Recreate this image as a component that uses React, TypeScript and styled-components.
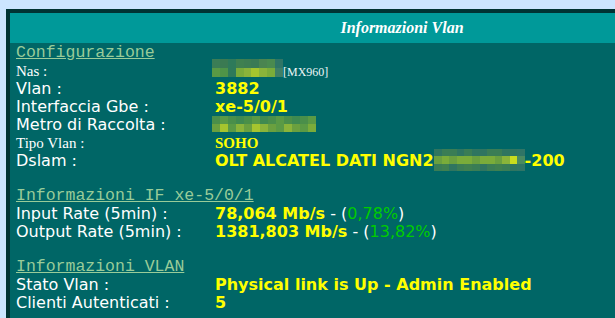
import React from 'react'
import { styled, createGlobalStyle } from 'styled-components'

const GlobalStyle = createGlobalStyle`
  html, body {
    margin: 0;
    padding: 0;
    overflow: hidden;
    background: #cce5ff;
  }
`

const Page = styled.div`
  padding: 9px 0 0 6px;
`

const Panel = styled.div`
  width: 784px;
  border: 4px solid #003333;
  background-color: #006666;
`

const Header = styled.div`
  height: 30px;
  background-color: #009999;
  display: flex;
  align-items: center;
  justify-content: center;
`

const HeaderTitle = styled.h1`
  margin: 0;
  font-family: 'Liberation Serif', 'Times New Roman', serif;
  font-style: italic;
  font-weight: bold;
  font-size: 16px;
  line-height: 18px;
  color: #ffffff;
`

const Body = styled.div`
  display: flex;
  flex-direction: column;
  gap: 17px;
  padding: 1px 6px 30px 6px;
`

const Section = styled.div`
  display: flex;
  flex-direction: column;
`

const SectionTitle = styled.div`
  height: 18px;
  line-height: 18px;
  font-family: 'Liberation Mono', 'Courier New', monospace;
  font-size: 16.5px;
  color: #99cc99;

  span {
    text-decoration: underline;
  }
`

const Row = styled.div`
  display: flex;
  height: 18px;
  white-space: nowrap;
`

const Label = styled.div<{ $serif?: boolean }>`
  flex: none;
  width: 199px;
  line-height: 18px;
  color: #ffffff;
  font-family: ${(p) =>
    p.$serif ? "'Liberation Serif', 'Times New Roman', serif" : "'DejaVu Sans', Verdana, sans-serif"};
  font-size: ${(p) => (p.$serif ? '15px' : '16px')};
`

const Value = styled.div<{ $serif?: boolean }>`
  line-height: 18px;
  color: #ffff00;
  font-weight: bold;
  font-family: ${(p) =>
    p.$serif ? "'Liberation Serif', 'Times New Roman', serif" : "'DejaVu Sans', Verdana, sans-serif"};
  font-size: ${(p) => (p.$serif ? '15px' : '16px')};
`

const Router = styled.span`
  font-size: 12px;
  font-weight: normal;
  color: #eef6f6;
`

const Plain = styled.span`
  font-weight: normal;
  color: #ffffff;
`

const Pct = styled.span`
  font-weight: normal;
  color: #00cc00;
`

const MosaicBox = styled.svg<{ $lead?: boolean; $mt: number; $mb: number }>`
  display: inline-block;
  vertical-align: baseline;
  margin-left: ${(p) => (p.$lead ? '-3px' : '0')};
  margin-top: ${(p) => p.$mt}px;
  margin-bottom: ${(p) => p.$mb}px;
`

type MosaicProps = {
  width: number
  height: number
  cells: string[][]
  lead?: boolean
  mt?: number
  mb?: number
}

const Mosaic: React.FC<MosaicProps> = ({ width, height, cells, lead, mt = 0, mb = 0 }) => {
  const rh = height / cells.length
  return (
    <MosaicBox width={width} height={height} $lead={lead} $mt={mt} $mb={mb} shapeRendering="crispEdges">
      {cells.map((row, r) => {
        const cw = width / row.length
        return row.map((c, i) => (
          <rect key={`${r}-${i}`} x={i * cw} y={r * rh} width={cw + 0.5} height={rh + 0.5} fill={c} />
        ))
      })}
    </MosaicBox>
  )
}

const nasCells = [
  ['#3b7d56', '#3a7a52', '#2e7a5a', '#3f8050', '#3d7d52', '#3a7a55', '#4a8450', '#4a8a4f', '#2f7566'],
  ['#5a9a45', '#4e9448', '#2e7a5a', '#7aac3a', '#8ab43a', '#a6c52e', '#8ab43a', '#7aac3a', '#3f7f66'],
]

const metroCells = [
  ['#4a8f4a', '#5a9a45', '#4a8f4a', '#3f8a50', '#4a9048', '#5a9a45', '#3f8a50', '#4a8f4a', '#5a9a45', '#4a8f4a', '#3f8a50', '#4a8f4a', '#5a9a45'],
  ['#6aa03f', '#a6c52e', '#5a9a45', '#8ab43a', '#6aa03f', '#a6c52e', '#8ab43a', '#6aa03f', '#5a9a45', '#8ab43a', '#6aa03f', '#5a9a45', '#7aac3a'],
]

const dslamCells = [
  ['#2f7560', '#3a7d55', '#3a7d55', '#2f7560', '#3a7d55', '#2f7560', '#2f7560', '#3a7d55', '#3a7d55', '#2f7560', '#2f7560', '#2f7566'],
  ['#6aa03f', '#7aac3a', '#6aa03f', '#7aac3a', '#7aac3a', '#6aa03f', '#7aac3a', '#7aac3a', '#6aa03f', '#8ab43a', '#c8dc1e', '#4a8a60'],
  ['#3a7d55', '#3f8050', '#2f7560', '#3a7d55', '#3f8050', '#3a7d55', '#2f7560', '#3a7d55', '#3f8050', '#3a7d55', '#2f7560', '#2f7566'],
]

export default function App() {
  return (
    <>
      <GlobalStyle />
      <Page>
        <Panel>
          <Header>
            <HeaderTitle>Informazioni Vlan</HeaderTitle>
          </Header>
          <Body>
            <Section>
              <SectionTitle>
                <span>Configurazione</span>
              </SectionTitle>
              <Row>
                <Label $serif>Nas :</Label>
                <Value $serif>
                  <Mosaic width={71} height={18} cells={nasCells} lead mt={-3} mb={-1} />
                  <Router>[MX960]</Router>
                </Value>
              </Row>
              <Row>
                <Label>Vlan :</Label>
                <Value>3882</Value>
              </Row>
              <Row>
                <Label>Interfaccia Gbe :</Label>
                <Value>xe-5/0/1</Value>
              </Row>
              <Row>
                <Label>Metro di Raccolta :</Label>
                <Value>
                  <Mosaic width={104} height={16} cells={metroCells} lead mb={-1.5} />
                </Value>
              </Row>
              <Row>
                <Label $serif>Tipo Vlan :</Label>
                <Value $serif>SOHO</Value>
              </Row>
              <Row>
                <Label>Dslam :</Label>
                <Value>
                  OLT ALCATEL DATI NGN2
                  <Mosaic width={91} height={22} cells={dslamCells} mt={-4} mb={-4.5} />
                  -200
                </Value>
              </Row>
            </Section>

            <Section>
              <SectionTitle>
                <span>Informazioni IF xe-5/0/1</span>
              </SectionTitle>
              <Row>
                <Label>Input Rate (5min) :</Label>
                <Value>
                  78,064 Mb/s<Plain> - (</Plain>
                  <Pct>0,78%</Pct>
                  <Plain>)</Plain>
                </Value>
              </Row>
              <Row>
                <Label>Output Rate (5min) :</Label>
                <Value>
                  1381,803 Mb/s<Plain> - (</Plain>
                  <Pct>13,82%</Pct>
                  <Plain>)</Plain>
                </Value>
              </Row>
            </Section>

            <Section>
              <SectionTitle>
                <span>Informazioni VLAN</span>
              </SectionTitle>
              <Row>
                <Label>Stato Vlan :</Label>
                <Value>Physical link is Up - Admin Enabled</Value>
              </Row>
              <Row>
                <Label>Clienti Autenticati :</Label>
                <Value>5</Value>
              </Row>
            </Section>
          </Body>
        </Panel>
      </Page>
    </>
  )
}
